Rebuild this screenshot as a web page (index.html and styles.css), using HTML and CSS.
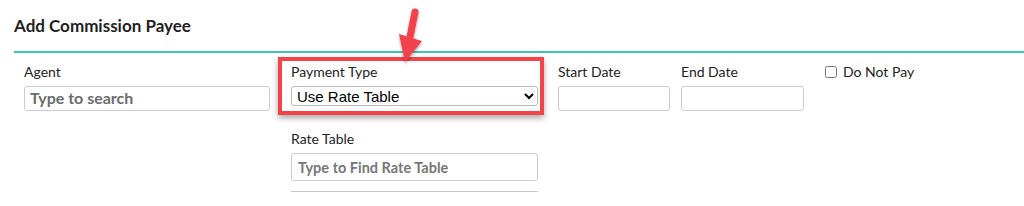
FILE: index.html
```html
<!DOCTYPE html>
<html>
<head>
<meta charset="utf-8" />
<title>Add Commission Payee</title>
<link rel="stylesheet" href="styles.css">
</head>
<body>
<div class="panel">
	<h2 class="panel-title">Add Commission Payee</h2>

	<div class="form-row">
		<div class="field agent">
			<label>Agent</label>
			<input type="text" class="text-input bold-ph" placeholder="Type to search" />
		</div>

		<div class="field payment">
			<div class="highlight">
				<label>Payment Type</label>
				<select class="select-input">
					<option>Use Rate Table</option>
					<option>Flat Amount</option>
					<option>Percent</option>
				</select>
			</div>
			<div class="rate-table">
				<label>Rate Table</label>
				<input type="text" class="text-input ph" placeholder="Type to Find Rate Table" />
				<div class="rule"></div>
			</div>
		</div>

		<div class="field start">
			<label>Start Date</label>
			<input type="text" class="text-input" />
		</div>

		<div class="field end">
			<label>End Date</label>
			<input type="text" class="text-input" />
		</div>

		<div class="field nopay">
			<label class="check"><input type="checkbox" /> Do Not Pay</label>
		</div>
	</div>

	<!-- annotation arrow -->
	<svg class="arrow" width="50" height="70" viewBox="0 0 50 70">
		<defs>
			<filter id="sh" x="-50%" y="-50%" width="200%" height="200%">
				<feDropShadow dx="0" dy="2" stdDeviation="1.5" flood-color="#000" flood-opacity="0.35"/>
			</filter>
		</defs>
		<g filter="url(#sh)" fill="#f2434b">
			<line x1="35" y1="12" x2="29" y2="42" stroke="#f2434b" stroke-width="7" stroke-linecap="round"/>
			<polygon points="19,34 42,41 25,62"/>
		</g>
	</svg>
</div>
</body>
</html>
```

FILE: styles.css
```css
*{margin:0; padding:0; box-sizing:border-box;}
body{font-family:"Lato","Noto Sans",sans-serif; color:#212529; background:#fff;}

.panel{position:relative; width:1024px; height:206px; overflow:hidden;}
.panel-title{font-size:17px; font-weight:bold; color:#1f1f1f; margin-left:14px; padding-top:16px; height:53px; border-bottom:2px solid #3cc8ac; line-height:20px;}

.form-row{display:flex; align-items:flex-start; padding:4px 0 0 24px;}
.field label{display:block; font-size:14px; line-height:20px; color:#222;}
.field{margin-top:5px;}

.text-input{display:block; margin-top:4px; height:25px; border:1px solid #ccc; border-radius:3px; padding:0 5px; font-family:"Lato",sans-serif; font-size:14px; background:#fff;}
.bold-ph::placeholder{font-weight:bold; color:#6c6c6c; font-size:16px;}
.ph::placeholder{font-weight:bold; color:#777; font-size:14.5px;}

.agent{width:246px;}
.agent .text-input{width:246px;}

.payment{margin:0 0 0 8px; width:266px;}
.highlight{border:4px solid #f2434b; padding:1px 2px 5px 9px; box-shadow:0 3px 6px rgba(0,0,0,0.35);}
.select-input{display:block; margin-top:4px; width:247px; height:20px; font-family:"Liberation Sans",Arial,sans-serif; font-size:15px; color:#000; border:1px solid #bbb; border-radius:3px; background:#fff; padding-left:1px;}

.rate-table{margin:14px 0 0 13px; width:247px;}
.rate-table .text-input{width:247px; height:28px; padding:0 6px;}
.rule{margin-top:10px; border-top:1px solid #c8c8c8;}

.start{margin-left:14px;}
.start .text-input{width:112px;}
.end{margin-left:11px;}
.end .text-input{width:123px;}

.nopay{margin-left:21px;}
.check{display:flex !important; align-items:center;}
.check input{width:12px; height:12px; margin:0 6px 0 0;}

.arrow{position:absolute; left:380px; top:0;}
```
